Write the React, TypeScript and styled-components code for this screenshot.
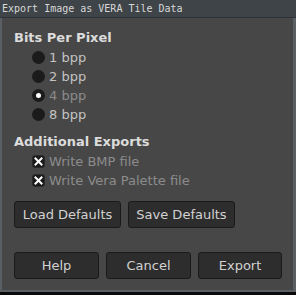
import styled, { createGlobalStyle } from 'styled-components';

const GlobalStyle = createGlobalStyle`
  html, body {
    margin: 0;
    padding: 0;
    background: #0a0a0a;
    width: 296px;
    height: 295px;
    overflow: hidden;
  }
`;

const Window = styled.div`
  width: 296px;
  height: 292px;
  display: flex;
  flex-direction: column;
  font-family: 'DejaVu Sans', 'Noto Sans', sans-serif;
`;

const TitleBar = styled.div`
  height: 17px;
  flex: none;
  background: #3e4448;
  border-bottom: 1px solid #2e3236;
  color: #d8d8d8;
  font-family: 'DejaVu Sans Mono', 'Liberation Mono', monospace;
  font-size: 10px;
  line-height: 17px;
  padding-left: 2px;
  white-space: nowrap;
`;

const Body = styled.div`
  flex: 1;
  background: #474747;
  border-left: 2px solid #5a5f63;
  border-right: 3px solid #5a5f63;
  border-bottom: 2px solid #5a5f63;
  padding: 12px 0 0 12px;
  display: flex;
  flex-direction: column;
`;

const Heading = styled.div<{ $top?: number }>`
  font-weight: bold;
  font-size: 13px;
  line-height: 16px;
  color: #dcdcdc;
  margin-top: ${({ $top }) => $top ?? 0}px;
  margin-bottom: 2px;
`;

const OptionRow = styled.div<{ $dim?: boolean }>`
  height: 19px;
  display: flex;
  align-items: center;
  gap: 4px;
  padding-left: 18px;
  font-size: 13px;
  color: ${({ $dim }) => ($dim ? '#8c8c8c' : '#c4c4c4')};
`;

const Radio = styled.span<{ $checked?: boolean }>`
  width: 13px;
  height: 13px;
  border-radius: 50%;
  background: #1b1b1b;
  box-sizing: border-box;
  display: flex;
  align-items: center;
  justify-content: center;
  &::after {
    content: '';
    width: 5px;
    height: 5px;
    border-radius: 50%;
    background: #ffffff;
    display: ${({ $checked }) => ($checked ? 'block' : 'none')};
  }
`;

const CheckBox = styled.span`
  width: 13px;
  height: 13px;
  border-radius: 3px;
  background: #1b1b1b;
  border: 1px solid #2a2a2a;
  box-sizing: border-box;
  display: flex;
  align-items: center;
  justify-content: center;
`;

const ButtonRow = styled.div<{ $top: number; $cols: string }>`
  display: grid;
  grid-template-columns: ${({ $cols }) => $cols};
  gap: 7px;
  margin-top: ${({ $top }) => $top}px;
`;

const Button = styled.button`
  height: 27px;
  background: #2d2d2d;
  border: 1px solid #1a1a1a;
  border-radius: 3px;
  color: #d2d2d2;
  font-family: 'DejaVu Sans', 'Noto Sans', sans-serif;
  font-size: 13px;
  padding: 0;
  box-sizing: border-box;
`;

const Cross = () => (
  <svg width="9" height="9" viewBox="0 0 9 9">
    <path d="M1.5 1.5 L7.5 7.5 M7.5 1.5 L1.5 7.5" stroke="#ffffff" strokeWidth="2" strokeLinecap="square" />
  </svg>
);

const bppOptions = [
  { label: '1 bpp', checked: false },
  { label: '2 bpp', checked: false },
  { label: '4 bpp', checked: true },
  { label: '8 bpp', checked: false },
];

export default function App() {
  return (
    <>
      <GlobalStyle />
      <Window>
        <TitleBar>Export Image as VERA Tile Data</TitleBar>
        <Body>
          <Heading>Bits Per Pixel</Heading>
          {bppOptions.map((o) => (
            <OptionRow key={o.label} $dim={o.checked}>
              <Radio $checked={o.checked} />
              {o.label}
            </OptionRow>
          ))}
          <Heading $top={10}>Additional Exports</Heading>
          <OptionRow $dim>
            <CheckBox>
              <Cross />
            </CheckBox>
            Write BMP file
          </OptionRow>
          <OptionRow $dim>
            <CheckBox>
              <Cross />
            </CheckBox>
            Write Vera Palette file
          </OptionRow>
          <ButtonRow $top={11} $cols="107px 107px">
            <Button>Load Defaults</Button>
            <Button>Save Defaults</Button>
          </ButtonRow>
          <ButtonRow $top={24} $cols="85px 85px 84px">
            <Button>Help</Button>
            <Button>Cancel</Button>
            <Button>Export</Button>
          </ButtonRow>
        </Body>
      </Window>
    </>
  );
}
